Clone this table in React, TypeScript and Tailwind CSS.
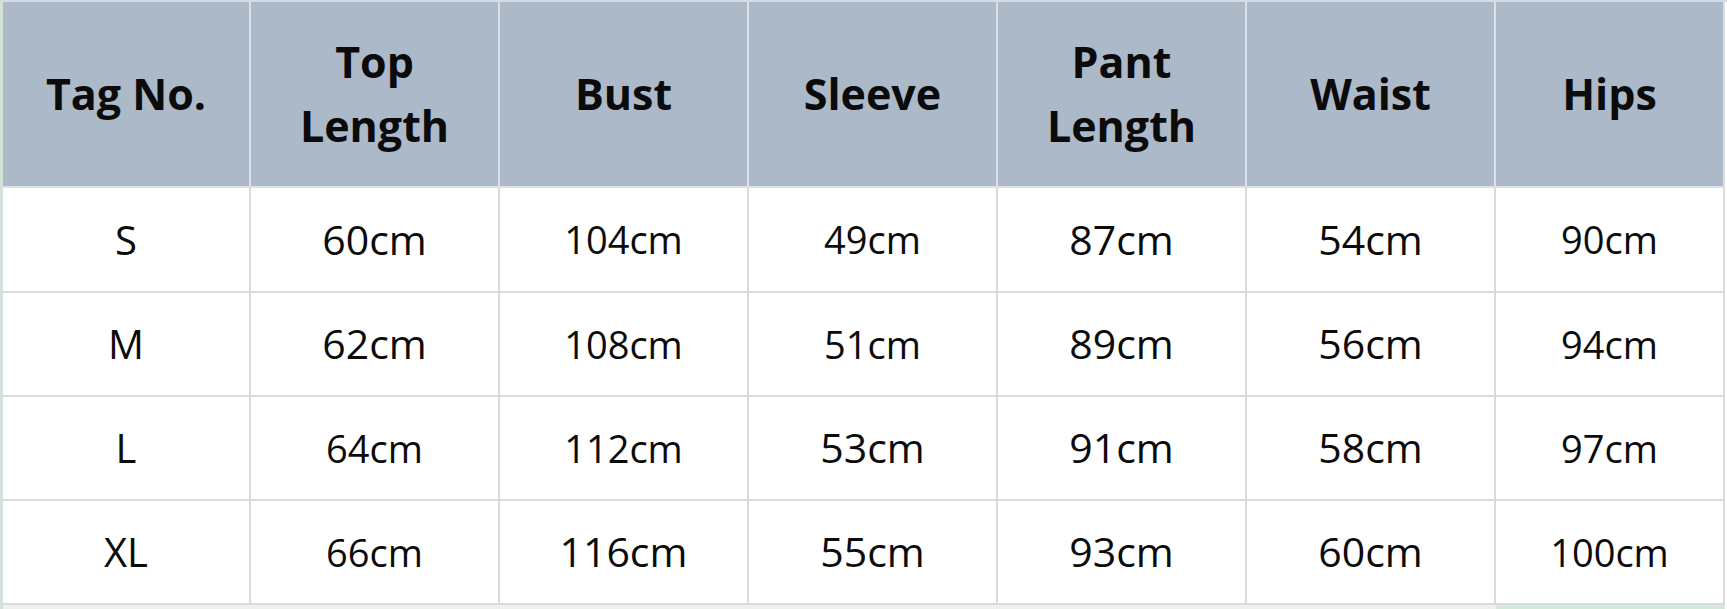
import React from "react";

type Cell = { v: string; big?: boolean };

const headers: string[][] = [
  ["Tag No."],
  ["Top", "Length"],
  ["Bust"],
  ["Sleeve"],
  ["Pant", "Length"],
  ["Waist"],
  ["Hips"],
];

// big = the cells that were typed a touch larger in the original sheet
const rows: Cell[][] = [
  [{ v: "S" }, { v: "60cm", big: true }, { v: "104cm" }, { v: "49cm" }, { v: "87cm", big: true }, { v: "54cm", big: true }, { v: "90cm" }],
  [{ v: "M" }, { v: "62cm", big: true }, { v: "108cm" }, { v: "51cm" }, { v: "89cm", big: true }, { v: "56cm", big: true }, { v: "94cm" }],
  [{ v: "L" }, { v: "64cm" }, { v: "112cm" }, { v: "53cm", big: true }, { v: "91cm", big: true }, { v: "58cm", big: true }, { v: "97cm" }],
  [{ v: "XL" }, { v: "66cm" }, { v: "116cm", big: true }, { v: "55cm", big: true }, { v: "93cm", big: true }, { v: "60cm", big: true }, { v: "100cm" }],
];

const rowHeights = ["h-[105px]", "h-[104px]", "h-[104px]", "h-[104px]"];

const colWidth = (i: number) => (i === 0 ? "w-[248px]" : i === 6 ? "w-[229px]" : "w-[249px]");

export default function App() {
  return (
    <div className="w-[1727px] h-[609px] bg-white overflow-hidden flex flex-col font-['Open_Sans',sans-serif] text-[#0b0b0b]">
      <div className="h-[2px] bg-[#d7dae0]" />
      <div className="flex-1 flex border-l-[3px] border-[#d5e0d7]">
        <div className="flex flex-col">
          {/* header */}
          <div className="flex h-[186px] border-b-2 border-[#dde1e7]">
            {headers.map((h, i) => (
              <div
                key={i}
                className={`${colWidth(i)} bg-[#acb9c9] border-r-2 border-[#dde1e7] flex flex-col items-center justify-center text-[43px] leading-[64px] font-bold`}
              >
                {h.map((line) => (
                  <span key={line}>{line}</span>
                ))}
              </div>
            ))}
          </div>

          {/* body */}
          {rows.map((r, ri) => (
            <div key={ri} className={`flex ${rowHeights[ri]} border-b-2 border-[#dadada]`}>
              {r.map((c, ci) => (
                <div
                  key={ci}
                  className={`${colWidth(ci)} border-r-2 border-[#dadada] flex items-center justify-center ${
                    ci === 0 ? "text-[40px]" : c.big ? "text-[41px]" : "text-[38px]"
                  }`}
                >
                  {c.v}
                </div>
              ))}
            </div>
          ))}

          <div className="flex-1 flex">
            <div className="w-[1493px] bg-[#eef0ee]" />
            <div className="w-[229px] bg-[#d3e8d6]" />
          </div>
        </div>
      </div>
    </div>
  );
}
